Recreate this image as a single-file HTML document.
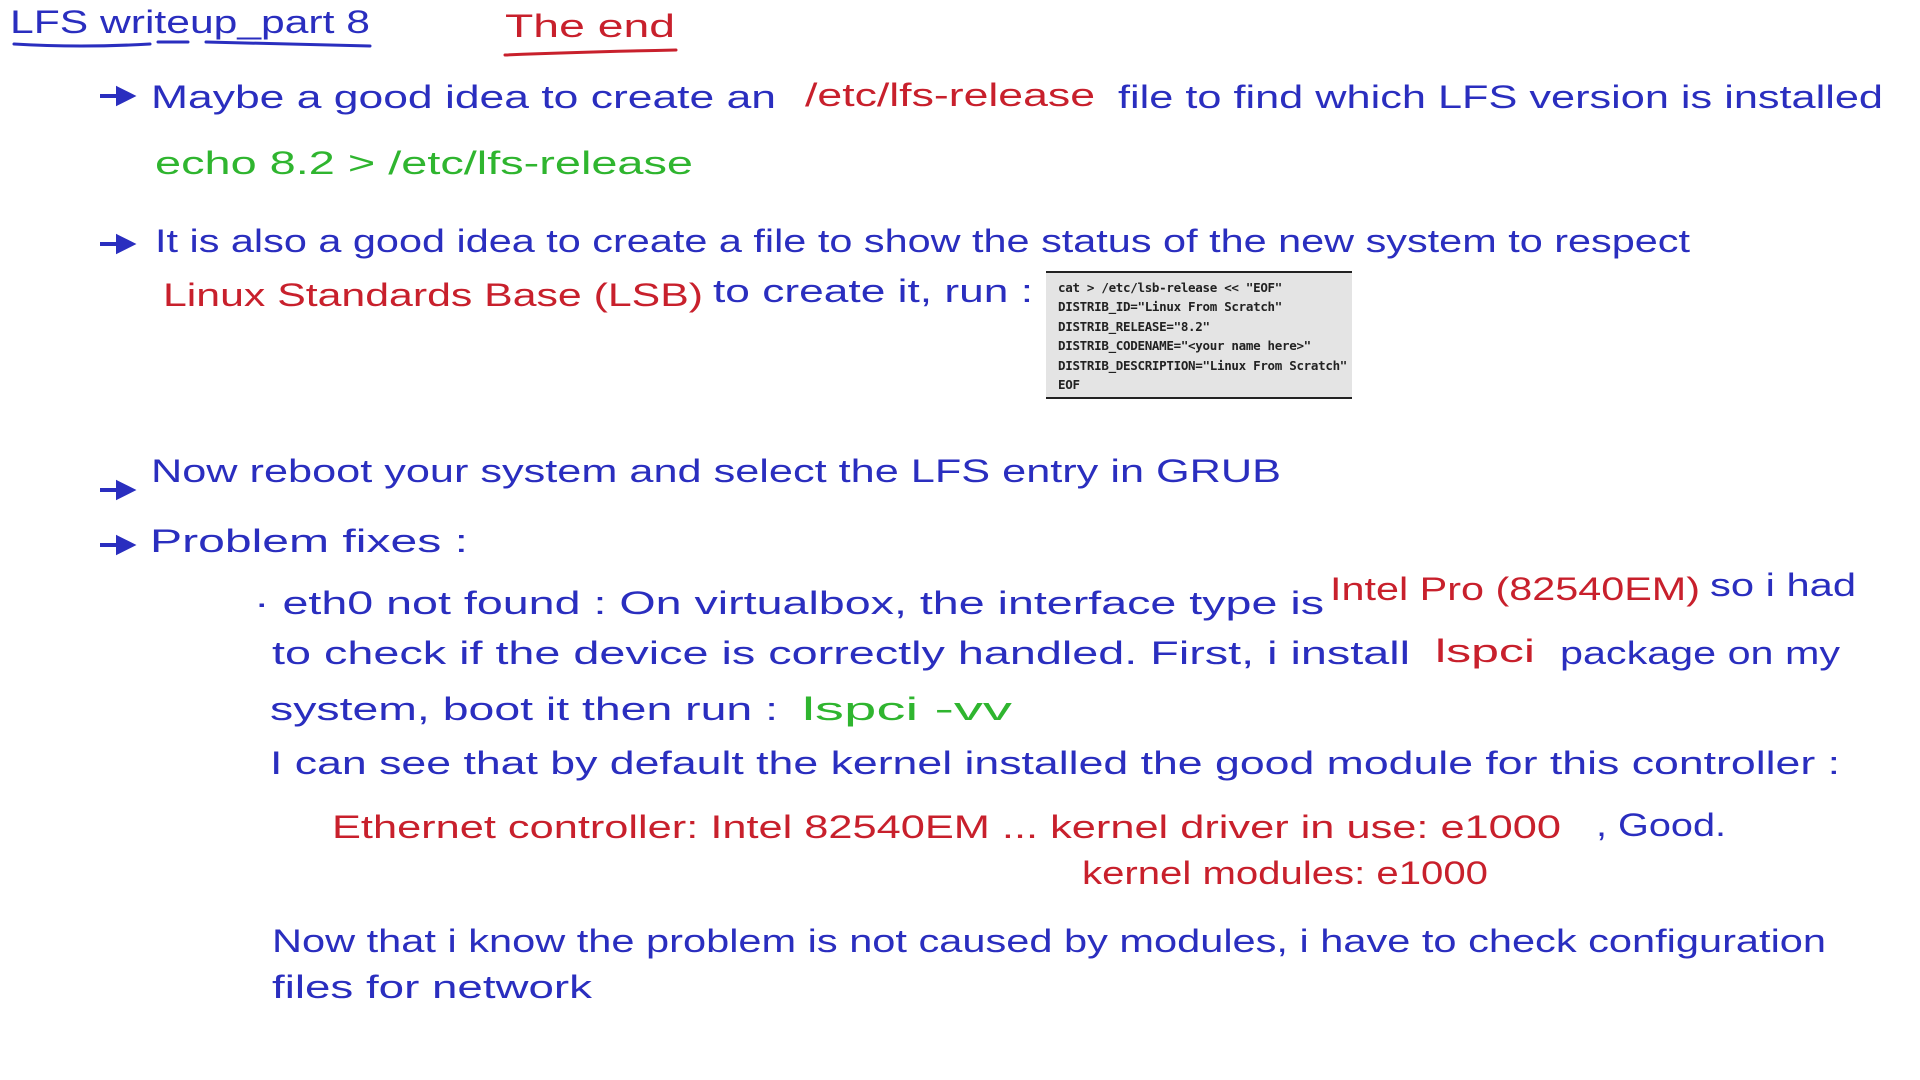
<!DOCTYPE html>
<html><head><meta charset="utf-8"><style>
html,body{margin:0;padding:0;background:#fff;width:1920px;height:1080px;overflow:hidden}
svg{display:block}
text{font-family:"Liberation Sans",sans-serif;font-size:32px}
.b{fill:#2a2ebf}.r{fill:#c8202c}.g{fill:#2fb52f}
#code{position:absolute;left:1046px;top:271px;width:306px;height:128px;background:#e4e4e4;border-top:2px solid #222;border-bottom:2px solid #222;font-family:"DejaVu Sans Mono","Liberation Mono",monospace;font-weight:bold;font-size:12.5px;line-height:19.4px;padding:5px 0 0 12px;box-sizing:border-box;color:#222;white-space:pre;letter-spacing:-0.3px}
</style></head><body>
<svg width="1920" height="1080" xmlns="http://www.w3.org/2000/svg">
<g stroke-linecap="round" fill="none" stroke-width="3">
<path d="M14 44 Q80 48 150 44 M158 42 L188 42 M206 42 Q300 44 370 46" stroke="#2a2ebf"/>
<path d="M505 55 Q580 52 676 50" stroke="#c8202c"/>
</g>
<g class="b">
<path d="M100 96 L125 96 M118 89 L132 96 L118 103 Z" stroke="#2a2ebf" stroke-width="4"/>
<path d="M100 244 L125 244 M118 237 L132 244 L118 251 Z" stroke="#2a2ebf" stroke-width="4"/>
<path d="M100 490 L125 490 M118 483 L132 490 L118 497 Z" stroke="#2a2ebf" stroke-width="4"/>
<path d="M100 545 L125 545 M118 538 L132 545 L118 552 Z" stroke="#2a2ebf" stroke-width="4"/>
</g>
<text class="b" x="10" y="33" textLength="360" lengthAdjust="spacingAndGlyphs">LFS writeup_part 8</text>
<text class="r" x="505" y="37" textLength="170" lengthAdjust="spacingAndGlyphs">The end</text>
<text class="b" x="151" y="108" textLength="625" lengthAdjust="spacingAndGlyphs">Maybe a good idea to create an</text>
<text class="r" x="805" y="106" textLength="290" lengthAdjust="spacingAndGlyphs">/etc/lfs-release</text>
<text class="b" x="1118" y="108" textLength="765" lengthAdjust="spacingAndGlyphs">file to find which LFS version is installed</text>
<text class="g" x="155" y="174" textLength="538" lengthAdjust="spacingAndGlyphs">echo 8.2 &gt; /etc/lfs-release</text>
<text class="b" x="155" y="252" textLength="1535" lengthAdjust="spacingAndGlyphs">It is also a good idea to create a file to show the status of the new system to respect</text>
<text class="r" x="163" y="306" textLength="540" lengthAdjust="spacingAndGlyphs">Linux Standards Base (LSB)</text>
<text class="b" x="713" y="302" textLength="320" lengthAdjust="spacingAndGlyphs">to create it, run :</text>
<text class="b" x="151" y="482" textLength="1130" lengthAdjust="spacingAndGlyphs">Now reboot your system and select the LFS entry in GRUB</text>
<text class="b" x="150" y="552" textLength="318" lengthAdjust="spacingAndGlyphs">Problem fixes :</text>
<text class="b" x="254" y="614" textLength="1070" lengthAdjust="spacingAndGlyphs">· eth0 not found : On virtualbox, the interface type is</text>
<text class="r" x="1330" y="600" textLength="370" lengthAdjust="spacingAndGlyphs">Intel Pro (82540EM)</text>
<text class="b" x="1710" y="596" textLength="146" lengthAdjust="spacingAndGlyphs">so i had</text>
<text class="b" x="272" y="664" textLength="1138" lengthAdjust="spacingAndGlyphs">to check if the device is correctly handled. First, i install</text>
<text class="r" x="1435" y="662" textLength="100" lengthAdjust="spacingAndGlyphs">lspci</text>
<text class="b" x="1560" y="664" textLength="280" lengthAdjust="spacingAndGlyphs">package on my</text>
<text class="b" x="270" y="720" textLength="508" lengthAdjust="spacingAndGlyphs">system, boot it then run :</text>
<text class="g" x="802" y="720" textLength="210" lengthAdjust="spacingAndGlyphs">lspci -vv</text>
<text class="b" x="270" y="774" textLength="1570" lengthAdjust="spacingAndGlyphs">I can see that by default the kernel installed the good module for this controller :</text>
<text class="r" x="332" y="838" textLength="1229" lengthAdjust="spacingAndGlyphs">Ethernet controller: Intel 82540EM ... kernel driver in use: e1000</text>
<text class="b" x="1596" y="836" textLength="130" lengthAdjust="spacingAndGlyphs">, Good.</text>
<text class="r" x="1082" y="884" textLength="406" lengthAdjust="spacingAndGlyphs">kernel modules: e1000</text>
<text class="b" x="272" y="952" textLength="1554" lengthAdjust="spacingAndGlyphs">Now that i know the problem is not caused by modules, i have to check configuration</text>
<text class="b" x="272" y="998" textLength="320" lengthAdjust="spacingAndGlyphs">files for network</text>
</svg>
<div id="code">cat &gt; /etc/lsb-release &lt;&lt; "EOF"
DISTRIB_ID="Linux From Scratch"
DISTRIB_RELEASE="8.2"
DISTRIB_CODENAME="&lt;your name here&gt;"
DISTRIB_DESCRIPTION="Linux From Scratch"
EOF</div>
</body></html>
